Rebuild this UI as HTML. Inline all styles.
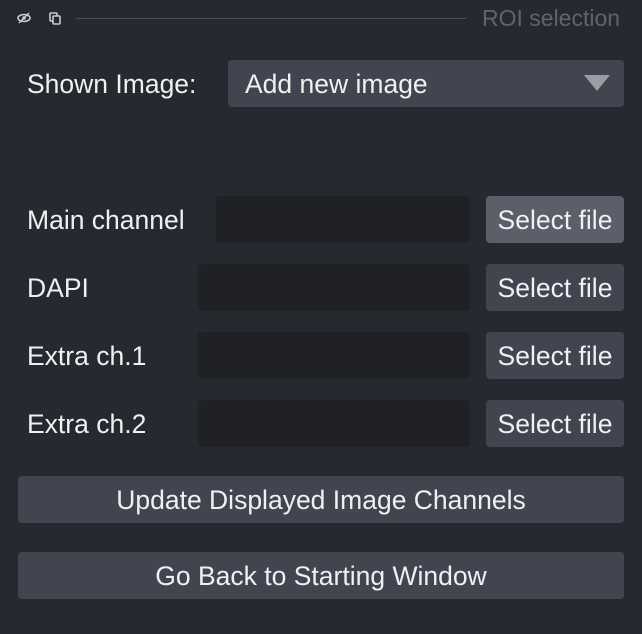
<html><head><style>
body{margin:0;width:642px;height:634px;background:#262930;font-family:"Liberation Sans",sans-serif;color:#eef0f1;position:relative;overflow:hidden}
.a{position:absolute}
.t{font-size:26.5px;line-height:49px}
.box{border-radius:4px}
.in{background:#202124}
.btn{background:#414550;text-align:center;font-size:26.5px;line-height:49px}
</style></head><body>
<svg class="a" style="left:14px;top:10px" width="50" height="18">
<ellipse cx="10" cy="8" rx="6" ry="3.5" fill="none" stroke="#c8cacd" stroke-width="1.6"/><circle cx="10" cy="8" r="1.8" fill="#c8cacd"/><line x1="5" y1="13" x2="15" y2="3" stroke="#c8cacd" stroke-width="1.4"/>
<rect x="36" y="3" width="7" height="8" fill="none" stroke="#c8cacd" stroke-width="1.6" rx="1"/><rect x="39" y="6" width="7" height="8" fill="#262930" stroke="#c8cacd" stroke-width="1.6" rx="1"/>
</svg>
<div class="a" style="left:76px;top:18px;width:390px;height:1px;background:#4a4e57"></div>
<div class="a" style="left:482px;top:5px;font-size:23px;color:#60646c">ROI selection</div>
<div class="a t" style="left:27px;top:60px">Shown Image:</div>
<div class="a box" style="left:228px;top:60px;width:396px;height:47px;background:#414550"></div>
<div class="a t" style="left:245px;top:60px">Add new image</div>
<svg class="a" style="left:584px;top:75px" width="28" height="18"><polygon points="0,0 26,0 13,16" fill="#9a9da3"/></svg>
<div class="a t" style="left:27px;top:196px">Main channel</div>
<div class="a box in" style="left:216px;top:196px;width:254px;height:47px"></div>
<div class="a box btn" style="left:486px;top:196px;width:138px;height:47px;background:#5a5f69">Select file</div>
<div class="a t" style="left:27px;top:264px">DAPI</div>
<div class="a box in" style="left:198px;top:264px;width:272px;height:47px"></div>
<div class="a box btn" style="left:486px;top:264px;width:138px;height:47px">Select file</div>
<div class="a t" style="left:27px;top:332px">Extra ch.1</div>
<div class="a box in" style="left:198px;top:332px;width:272px;height:47px"></div>
<div class="a box btn" style="left:486px;top:332px;width:138px;height:47px">Select file</div>
<div class="a t" style="left:27px;top:400px">Extra ch.2</div>
<div class="a box in" style="left:198px;top:400px;width:272px;height:47px"></div>
<div class="a box btn" style="left:486px;top:400px;width:138px;height:47px">Select file</div>
<div class="a box btn" style="left:18px;top:476px;width:606px;height:47px">Update Displayed Image Channels</div>
<div class="a box btn" style="left:18px;top:552px;width:606px;height:47px">Go Back to Starting Window</div>
</body></html>
